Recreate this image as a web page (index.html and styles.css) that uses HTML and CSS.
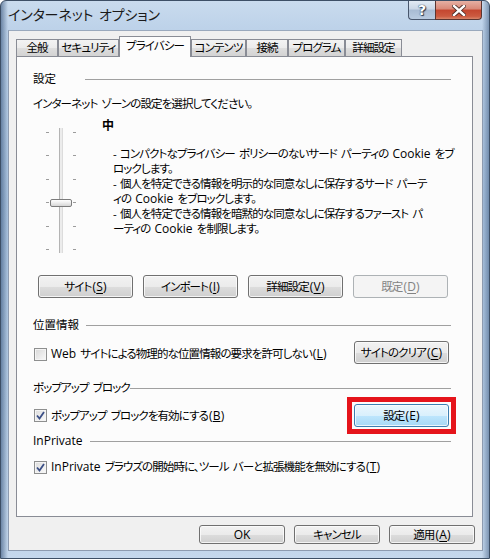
FILE: index.html
```html
<!DOCTYPE html>
<html lang="ja">
<head>
<meta charset="utf-8">
<title>インターネット オプション</title>
<link rel="stylesheet" href="styles.css">
</head>
<body>
<div class="window">
  <div class="titlebar">
    <span class="title">インターネット オプション</span>
    <div class="caption">
      <div class="cbtn help">?</div>
      <div class="cbtn close">
        <svg width="14" height="11" viewBox="0 0 14 11"><path d="M2 1 L12 10 M12 1 L2 10" stroke="#4a2a24" stroke-width="4.2" stroke-linecap="square"/><path d="M2 1 L12 10 M12 1 L2 10" stroke="#ffffff" stroke-width="2.4" stroke-linecap="square"/></svg>
      </div>
    </div>
  </div>
  <div class="client">
    <div class="tabs">
      <div class="tab w-general">全般</div>
      <div class="tab w-security">セキュリティ</div>
      <div class="tab tab-active w-privacy">プライバシー</div>
      <div class="tab w-content">コンテンツ</div>
      <div class="tab w-connect">接続</div>
      <div class="tab w-program">プログラム</div>
      <div class="tab w-advanced">詳細設定</div>
    </div>
    <div class="panel">
      <div class="ghead ghead-wide"><span>設定</span><i class="rule"></i></div>
      <div class="zone-text">インターネット ゾーンの設定を選択してください。</div>
      <div class="level">
        <div class="slider">
          <div class="ticks"><i></i><i></i><i></i><i></i><i></i><i></i></div>
          <div class="track"></div>
          <div class="ticks"><i></i><i></i><i></i><i></i><i></i><i></i></div>
          <div class="thumb"></div>
        </div>
        <div class="level-text">
          <div class="level-name">中</div>
          <div class="level-desc">- コンパクトなプライバシー ポリシーのないサード パーティの <span class="lat">Cookie</span> をブ<br>ロックします。<br>- 個人を特定できる情報を明示的な同意なしに保存するサード パーテ<br>ィの <span class="lat">Cookie</span> をブロックします。<br>- 個人を特定できる情報を暗黙的な同意なしに保存するファースト パ<br>ーティの <span class="lat">Cookie</span> を制限します。</div>
        </div>
      </div>
      <div class="btn-row">
        <div class="btn">サイト<span class="key">(<u>S</u>)</span></div>
        <div class="btn">インポート<span class="key">(<u>I</u>)</span></div>
        <div class="btn">詳細設定<span class="key">(<u>V</u>)</span></div>
        <div class="btn btn-disabled">既定<span class="key">(<u>D</u>)</span></div>
      </div>
      <div class="ghead ghead-loc"><span>位置情報</span><i class="rule"></i></div>
      <div class="opt-row row-loc">
        <label class="check"><span class="box"></span><span><span class="lat">Web</span> サイトによる物理的な位置情報の要求を許可しない<span class="key">(<u>L</u>)</span></span></label>
        <div class="btn btn-side">サイトのクリア<span class="key">(<u>C</u>)</span></div>
      </div>
      <div class="ghead ghead-popup"><span>ポップアップ ブロック</span><i class="rule"></i></div>
      <div class="opt-row row-popup">
        <label class="check"><span class="box box-checked"><svg width="9" height="9" viewBox="0 0 9 9"><path d="M1 4.5 L3.5 7.5 L8 1" fill="none" stroke="#3b4f86" stroke-width="1.8"/></svg></span><span>ポップアップ ブロックを有効にする<span class="key">(<u>B</u>)</span></span></label>
        <div class="mark"><div class="btn btn-hot">設定<span class="key">(E)</span></div></div>
      </div>
      <div class="ghead ghead-inprivate"><span class="lat">InPrivate</span><i class="rule"></i></div>
      <div class="opt-row row-inprivate">
        <label class="check"><span class="box box-checked"><svg width="9" height="9" viewBox="0 0 9 9"><path d="M1 4.5 L3.5 7.5 L8 1" fill="none" stroke="#3b4f86" stroke-width="1.8"/></svg></span><span><span class="lat">InPrivate</span> ブラウズの開始時に、ツール バーと拡張機能を無効にする<span class="key">(<u>T</u>)</span></span></label>
      </div>
    </div>
    <div class="footer">
      <div class="btn fbtn"><span class="lat">OK</span></div>
      <div class="btn fbtn">キャンセル</div>
      <div class="btn fbtn">適用<span class="key">(<u>A</u>)</span></div>
    </div>
  </div>
</div>
</body>
</html>
```

FILE: styles.css
```css
html, body {
  margin: 0;
  padding: 0;
  background: #ffffff;
}

body {
  font-family: "Open Sans", "Noto Sans CJK JP", sans-serif;
  font-size: 11.5px;
  letter-spacing: -0.9px;
  word-spacing: 2px;
  font-feature-settings: "palt";
  color: #000000;
}

.lat {
  font-family: "Open Sans", sans-serif;
  font-size: 12px;
  letter-spacing: 0;
  word-spacing: 0;
}

.key {
  font-family: "Open Sans", sans-serif;
  font-size: 12px;
  letter-spacing: 0.2px;
  margin-left: 1px;
}

.window {
  box-sizing: border-box;
  width: 490px;
  height: 559px;
  border: 1px solid #3d4f66;
  border-radius: 6px 6px 0 0;
  background:
    linear-gradient(90deg, rgba(40,70,110,0.55) 0px, rgba(40,70,110,0) 7px, rgba(40,70,110,0) 481px, rgba(40,70,110,0.45) 488px),
    linear-gradient(180deg, #c9dbee 0px, #bdd2e9 28px, #a9c2de 200px, #b4cbe4 400px, #c4d7ec 100%);
  display: flex;
  flex-direction: column;
}

.titlebar {
  height: 29px;
  display: flex;
  justify-content: space-between;
  align-items: flex-start;
}

.title {
  margin: 4px 0 0 7px;
  font-size: 14px;
  line-height: 20px;
  color: #1a1a1a;
  letter-spacing: -0.1px;
}

.caption {
  display: flex;
  margin-right: 7px;
}

.cbtn {
  height: 18px;
  border: 1px solid #48566c;
  border-top: none;
  display: flex;
  align-items: center;
  justify-content: center;
}

.help {
  width: 26px;
  border-radius: 0 0 0 4px;
  border-right: none;
  background: linear-gradient(180deg, #e2eaf4 0%, #c9d6e6 45%, #a8bbd3 50%, #b9cbe0 100%);
  color: #ffffff;
  font-family: "DejaVu Sans", sans-serif;
  font-weight: bold;
  font-size: 14px;
  letter-spacing: 0;
  text-shadow: 0 0 1px #2d3c52, 0 0 1px #2d3c52, 1px 1px 1px #2d3c52;
}

.close {
  width: 45px;
  border-radius: 0 0 4px 0;
  border-color: #5b3530;
  background: linear-gradient(180deg, #e6b0a4 0%, #d98877 45%, #c4462f 50%, #cc5a40 85%, #d9866a 100%);
}

.client {
  flex: 1;
  margin: 0 6px 7px 7px;
  background: #f0f0f0;
  border: 1px solid #8d9bb0;
  border-top-color: #9aa9bd;
  display: flex;
  flex-direction: column;
  padding: 5px 7px 0 7px;
}

.tabs {
  display: flex;
  align-items: flex-end;
  height: 20px;
}

.tab {
  box-sizing: border-box;
  height: 17px;
  border: 1px solid #898c95;
  border-bottom: none;
  background: linear-gradient(180deg, #f3f3f3 0%, #ebebeb 50%, #dedede 50%, #d3d3d3 100%);
  line-height: 15px;
  text-align: center;
  white-space: nowrap;
}

.tab-active {
  position: relative;
  z-index: 1;
  height: 21px;
  margin-bottom: -1px;
  background: #fcfcfc;
  line-height: 18px;
}

.w-general { width: 42px; }
.w-security { width: 61px; }
.w-privacy { width: 72px; }
.w-content { width: 55px; }
.w-connect { width: 42px; }
.w-program { width: 57px; }
.w-advanced { width: 57px; }

.panel {
  box-sizing: border-box;
  width: 457px;
  height: 461px;
  border: 1px solid #898c95;
  background: #fcfcfc;
  padding: 14px 21px 0 16px;
  display: flex;
  flex-direction: column;
}

.ghead {
  display: flex;
  align-items: center;
  height: 16px;
  line-height: 16px;
  gap: 7px;
  white-space: nowrap;
}

.ghead-wide { gap: 29px; letter-spacing: 0; }
.ghead-popup { gap: 0; margin-top: 16px; }
.ghead-loc { margin-top: 19px; letter-spacing: 0; }
.ghead-inprivate { margin-top: 6px; }

.rule {
  flex: 1;
  height: 0;
  border-top: 1px solid #a0a0a0;
  margin-top: 1px;
}

.zone-text {
  margin-top: 9px;
  line-height: 16px;
  height: 16px;
  white-space: nowrap;
}

.level {
  margin-top: 6px;
  display: flex;
  align-items: flex-start;
}

.slider {
  position: relative;
  margin: 10px 0 0 13px;
  height: 125px;
  display: flex;
  gap: 10px;
}

.ticks {
  width: 3px;
  display: flex;
  flex-direction: column;
  justify-content: space-between;
  padding: 4px 0 3px;
}

.ticks i {
  display: block;
  width: 3px;
  height: 1px;
  background: #9c9c9c;
}

.track {
  box-sizing: border-box;
  width: 4px;
  border-left: 1px solid #b4b4b4;
  border-right: 1px solid #dcdcdc;
  background: #ececec;
}

.thumb {
  position: absolute;
  left: 4px;
  top: 71px;
  box-sizing: border-box;
  width: 22px;
  height: 8px;
  border: 1px solid #7c7c7c;
  border-radius: 2px;
  background: linear-gradient(180deg, #ffffff 0%, #ececec 50%, #d6d6d6 100%);
}

.level-text {
  margin-left: 26px;
}

.level-name {
  font-weight: bold;
  line-height: 16px;
  height: 16px;
  font-size: 12px;
}

.level-desc {
  margin-top: 12px;
  padding-left: 11px;
  line-height: 15px;
  white-space: nowrap;
}

.btn-row {
  margin-top: 22px;
  padding-left: 5px;
  display: flex;
  gap: 10px;
}

.btn {
  box-sizing: border-box;
  width: 95px;
  height: 23px;
  border: 1px solid #707070;
  border-radius: 3px;
  background: linear-gradient(180deg, #f2f2f2 0%, #ebebeb 50%, #dddddd 50%, #cfcfcf 100%);
  box-shadow: inset 0 0 0 1px rgba(252,252,252,0.8);
  display: flex;
  align-items: center;
  justify-content: center;
  white-space: nowrap;
  line-height: 16px;
}

.btn u {
  text-decoration-thickness: 1px;
  text-underline-offset: 2px;
}

.btn-disabled {
  border-color: #adb2b5;
  background: #f4f4f4;
  box-shadow: none;
  color: #838383;
}

.mark {
  margin: -7px -5px -7px 0;
  padding: 2px;
  border: 5px solid #e5141b;
  background: #fcfcfc;
}

.btn-hot {
  border-color: #3c7fb1;
  background: linear-gradient(180deg, #eaf6fd 0%, #d9f0fc 50%, #bee6fd 50%, #a7d9f5 100%);
}

.opt-row {
  display: flex;
  align-items: center;
  justify-content: space-between;
  white-space: nowrap;
}

.row-loc { margin-top: 8px; }
.row-popup { margin-top: 8px; }
.row-inprivate { margin-top: 10px; height: 16px; }

.row-loc .check { padding-top: 3px; }

.btn-side { margin-right: 2px; }

.check {
  display: flex;
  align-items: center;
  gap: 4px;
  margin-left: 1px;
  line-height: 16px;
}

.box {
  box-sizing: border-box;
  width: 13px;
  height: 13px;
  border: 1px solid #8e8f8f;
  background: linear-gradient(135deg, #d8d8d8 0%, #f2f2f2 80%, #fbfbfb 100%);
  box-shadow: inset 0 0 0 1px #f4f4f4;
  display: flex;
  align-items: center;
  justify-content: center;
}

.box-checked {
  background: linear-gradient(135deg, #dcdcdc 0%, #f4f4f4 80%, #ffffff 100%);
}

.footer {
  display: flex;
  justify-content: flex-end;
  gap: 9px;
  margin-top: 8px;
}

.fbtn {
  width: 86px;
  height: 19px;
}
```
